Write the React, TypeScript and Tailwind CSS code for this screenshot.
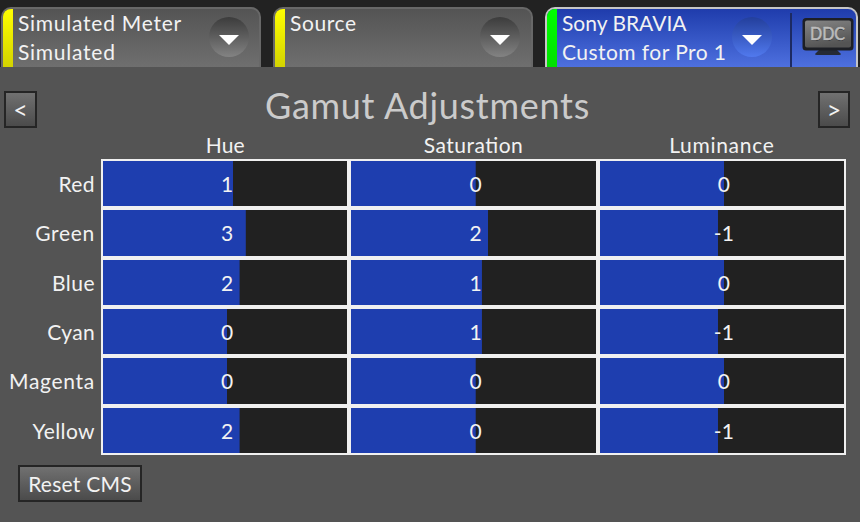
import clsx from 'clsx';

interface Adjustment {
  label: string;
  labelClass: string;
  values: number[];
}

interface Line {
  text: string;
  className: string;
}

const columns = [
  { name: 'Hue', className: '' },
  { name: 'Saturation', className: 'tracking-[0.5px]' },
  { name: 'Luminance', className: 'tracking-[0.7px]' },
];

const adjustments: Adjustment[] = [
  { label: 'Red', labelClass: 'tracking-[0.4px]', values: [1, 0, 0] },
  { label: 'Green', labelClass: 'tracking-[0.7px]', values: [3, 2, -1] },
  { label: 'Blue', labelClass: 'tracking-[0.5px]', values: [2, 1, 0] },
  { label: 'Cyan', labelClass: 'tracking-[0.3px]', values: [0, 1, -1] },
  { label: 'Magenta', labelClass: 'tracking-[0.7px]', values: [0, 0, 0] },
  { label: 'Yellow', labelClass: 'tracking-[0.4px]', values: [2, 0, -1] },
];

const meterLines: Line[] = [
  { text: 'Simulated Meter', className: 'tracking-[0.75px]' },
  { text: 'Simulated', className: 'tracking-[0.75px]' },
];

const sourceLines: Line[] = [{ text: 'Source', className: 'tracking-[0.6px]' }];

const displayLines: Line[] = [
  { text: 'Sony BRAVIA', className: '' },
  { text: 'Custom for Pro 1', className: 'tracking-[0.45px]' },
];

function TabLines({ lines }: { lines: Line[] }) {
  return (
    <div className="-mt-px flex-1 pl-[5px] leading-[29px]">
      {lines.map((line) => (
        <div key={line.text} className={clsx('whitespace-nowrap', line.className)}>
          {line.text}
        </div>
      ))}
    </div>
  );
}

function DropdownButton({ active = false }: { active?: boolean }) {
  return (
    <button
      className={clsx(
        'mt-2 flex size-10 shrink-0 items-center justify-center rounded-full bg-linear-to-b',
        active ? 'from-[#233f9c] to-[#5179ee]' : 'from-[#3c3c3c] to-[#838383]'
      )}
    >
      <svg width="20" height="10" viewBox="0 0 20 10" className="mt-[6px]">
        <path d="M0 0H20L10 10Z" fill="#fff" />
      </svg>
    </button>
  );
}

function DeviceTab({ lines, className }: { lines: Line[]; className: string }) {
  return (
    <div
      className={clsx(
        'flex h-[60px] overflow-hidden rounded-t-[10px] border-2 border-b-0 border-[#686868] bg-linear-to-b from-[#545454] to-[#6f6f6f]',
        className
      )}
    >
      <div className="w-[10px] shrink-0 bg-linear-to-b from-[#ffff00] to-[#d3d300]" />
      <TabLines lines={lines} />
      <DropdownButton />
    </div>
  );
}

function DdcMonitor() {
  return (
    <svg width="52" height="40" viewBox="0 0 52 40">
      <defs>
        <linearGradient id="screen" x1="0" y1="0" x2="0.3" y2="1">
          <stop offset="0" stopColor="#858585" />
          <stop offset="1" stopColor="#545454" />
        </linearGradient>
      </defs>
      <path d="M18 32H34L39 37Q39 38 37 38H15Q13 38 13 37Z" fill="#252a35" />
      <rect x="0.500" y="1" width="51" height="32.500" rx="3.500" fill="#1d1f25" />
      <rect x="3" y="3.500" width="46" height="27" rx="2" fill="url(#screen)" />
      <text
        x="25.500"
        y="23.800"
        textAnchor="middle"
        textLength="35"
        lengthAdjust="spacingAndGlyphs"
        fontSize="17.500"
        fill="#33363a"
      >
        DDC
      </text>
      <text
        x="25.500"
        y="23"
        textAnchor="middle"
        textLength="35"
        lengthAdjust="spacingAndGlyphs"
        fontSize="17.500"
        fill="#bcbcbc"
        stroke="#bcbcbc"
        strokeWidth="0.600"
      >
        DDC
      </text>
    </svg>
  );
}

function PanelButton({ children, className }: { children: string; className: string }) {
  return (
    <button
      className={clsx(
        'h-[37px] whitespace-nowrap border-2 border-[#252525] bg-linear-to-b from-[#717171] to-[#4b4b4b]',
        className
      )}
    >
      {children}
    </button>
  );
}

function ValueBar({ value }: { value: number }) {
  // zero sits just right of the middle, each step is 2.54% of the bar
  const fill = 50.9 + value * 2.54;

  return (
    <div
      className="flex items-center justify-center bg-[#212121] bg-linear-to-r from-[#1e3eaf] to-[#1e3eaf] bg-no-repeat pl-1"
      style={{ backgroundSize: `${fill}% 100%` }}
    >
      {value}
    </div>
  );
}

export default function App() {
  return (
    <div className="flex h-[522px] w-[860px] flex-col overflow-hidden bg-[#545454] font-['Lato','Open_Sans',sans-serif] text-[21px] text-[#f2f2f2] [font-feature-settings:'liga'_1]">
      <header className="flex h-[67px] shrink-0 bg-[#222222] pt-[7px] pl-px">
        <DeviceTab lines={meterLines} className="w-[260px] pr-[10px]" />
        <DeviceTab lines={sourceLines} className="ml-3 w-[260px] pr-[11px]" />

        <div className="ml-3 flex h-[60px] w-[313px] overflow-hidden rounded-t-[10px] border-2 border-b-0 border-[#c6c6c6] bg-linear-to-b from-[#1f3cac] to-[#4e70df]">
          <div className="w-[10px] shrink-0 bg-linear-to-b from-[#00ff00] to-[#00e000]" />
          <div className="flex w-[175px] shrink-0">
            <TabLines lines={displayLines} />
          </div>
          <DropdownButton active />
          <div className="mt-1 ml-[18px] w-[2px] shrink-0 bg-[#1c2a62]" />
          <div className="mt-2 ml-[10px] shrink-0">
            <DdcMonitor />
          </div>
        </div>
      </header>

      <main className="flex flex-col">
        <div className="flex items-start justify-between pt-6 pr-[10px] pl-1">
          <PanelButton className="w-[33px] text-[25px] leading-[33px]">&lt;</PanelButton>
          <h1 className="h-[37px] text-[36px] leading-[29px] tracking-[0.7px] text-[#cbcbcb]">Gamut Adjustments</h1>
          <PanelButton className="w-8 text-[25px] leading-[33px]">&gt;</PanelButton>
        </div>

        <div className="ml-[101px] grid h-[31px] w-[745px] grid-cols-3 pt-[3px] text-center leading-[28px]">
          {columns.map((column) => (
            <div key={column.name}>
              <span className={column.className}>{column.name}</span>
            </div>
          ))}
        </div>

        <div className="flex h-[296px]">
          <div className="grid w-[101px] grid-rows-6 gap-1 py-[2px] pr-[6px] text-right">
            {adjustments.map((row) => (
              <div key={row.label} className="flex items-center justify-end">
                <span className={row.labelClass}>{row.label}</span>
              </div>
            ))}
          </div>
          <div className="grid w-[745px] grid-cols-3 grid-rows-6 gap-1 bg-[#f0f0f0] p-[2px]">
            {adjustments.map((row) =>
              row.values.map((value, i) => <ValueBar key={`${row.label}-${i}`} value={value} />)
            )}
          </div>
        </div>

        <PanelButton className="mt-[10px] ml-[18px] w-[124px] tracking-[0.25px]">Reset CMS</PanelButton>
      </main>
    </div>
  );
}
